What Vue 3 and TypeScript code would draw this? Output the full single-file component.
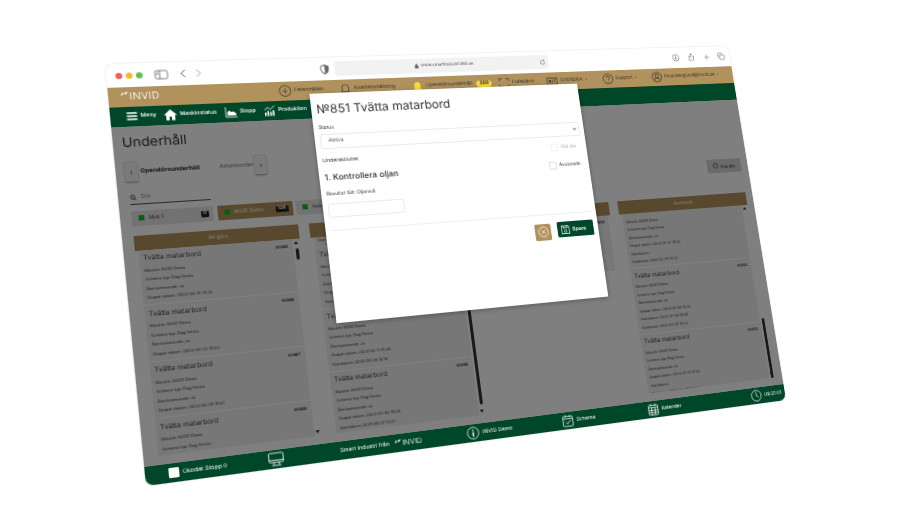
<template>
  <div class="stage">
    <div class="win" :style="{ transform: matrix }">
      <div class="flat">
        <div class="chrome">
          <div class="lights"><i class="red"></i><i class="amber"></i><i class="lime"></i></div>
          <svg class="cicon side" viewBox="0 0 24 20"><rect x="1" y="2" width="22" height="16" rx="3" /><path d="M9 2v16M3.500 6h3M3.500 9h3" /></svg>
          <svg class="cicon back" viewBox="0 0 12 20"><path d="M10 2 2 10l8 8" /></svg>
          <svg class="cicon fwd" viewBox="0 0 12 20"><path d="m2 2 8 8-8 8" /></svg>
          <svg class="shield" viewBox="0 0 20 22"><path d="M10 1 2 4v6c0 5 3.500 9 8 11 4.500-2 8-6 8-11V4z" fill="#fff" stroke="#666" stroke-width="2" /><path d="M10 1v20c4.500-2 8-6 8-11V4z" fill="#666" /></svg>
          <div class="url">
            <svg class="lock" viewBox="0 0 10 12"><path d="M1 5h8v7H1zM3 5V3a2 2 0 0 1 4 0v2" /></svg>
            <span>www.smartindustri365.se</span>
            <svg class="cicon reload" viewBox="0 0 20 20"><path d="M16 10a6 6 0 1 1-2-4.500M14 2v4h-4" /></svg>
          </div>
          <svg class="cicon dl" viewBox="0 0 22 22"><circle cx="11" cy="11" r="9" /><path d="M11 6v9M7.500 12l3.500 3.500 3.500-3.500" /></svg>
          <svg class="cicon share" viewBox="0 0 20 24"><path d="M6 9H3v13h14V9h-3M10 15V2M6.500 5 10 1.500 13.500 5" /></svg>
          <svg class="cicon plus" viewBox="0 0 20 20"><path d="M10 3v14M3 10h14" /></svg>
          <svg class="cicon copies" viewBox="0 0 22 22"><rect x="7" y="7" width="13" height="13" rx="2" /><path d="M15 4a2 2 0 0 0-2-2H4a2 2 0 0 0-2 2v9a2 2 0 0 0 2 2" /></svg>
        </div>

        <header class="topbar">
          <div class="logo">
            <svg class="leaf" viewBox="0 0 24 16"><path d="M1 14C1 8 4 4 9 3c0 6-3 10-8 11zM11 11c0-5 4-9 12-10-1 6-5 10-12 10z" /></svg>
            <span>INVID</span>
          </div>
          <div class="tool">
            <svg class="ic" viewBox="0 0 28 28"><circle cx="14" cy="14" r="12" /><path d="M14 8v12M8 14h12" /></svg>
            <span>Felanmälan</span>
          </div>
          <div class="tool">
            <svg class="ic" viewBox="0 0 28 28"><path d="M7 21V12a7 7 0 0 1 14 0v9M4 21h20M12 24h4" /></svg>
            <span>Kvalitetsmätning</span>
          </div>
          <div class="tool">
            <svg class="ic bell" viewBox="0 0 28 28"><path d="M7 21V12a7 7 0 0 1 14 0v9l3 2H4z" /></svg>
            <span>Operatörsunderhåll</span><b class="count">389</b>
          </div>
          <div class="tool">
            <svg class="ic" viewBox="0 0 28 28"><path d="M3 10V4h7M18 4h7v6M25 18v6h-7M10 24H3v-6" /></svg>
            <span>Fullskärm</span>
          </div>
          <div class="tool">
            <svg class="ic" viewBox="0 0 28 28"><rect x="2" y="7" width="24" height="15" /><path d="M7 18v-7l3 7v-7M14 11v7M18 11h4M20 11v7" /></svg>
            <span class="caret">SVENSKA</span>
          </div>
          <div class="tool">
            <svg class="ic" viewBox="0 0 28 28"><circle cx="14" cy="14" r="12" /><path d="M10 11a4 4 0 1 1 6 3.500c-1.500.8-2 1.500-2 3M14 20v2" /></svg>
            <span class="caret">Support</span>
          </div>
          <div class="tool">
            <svg class="ic" viewBox="0 0 28 28"><circle cx="14" cy="14" r="12" /><circle cx="14" cy="11" r="4.500" /><path d="M6 23c1-5 4-7 8-7s7 2 8 7" /></svg>
            <span class="caret">linus.berglund@invid.se</span>
          </div>
        </header>

        <nav class="nav">
          <div class="navitem">
            <svg class="navic" viewBox="0 0 24 24"><path d="M3 6h18M3 12h18M3 18h18" stroke-width="2.800" /></svg>
            <span>Meny</span>
          </div>
          <div class="navitem">
            <svg class="navic" viewBox="0 0 24 24"><path class="solid" d="M12 2 0 13h4v10h6v-7h4v7h6V13h4z" /></svg>
            <span>Maskinstatus</span>
          </div>
          <div class="navitem">
            <svg class="navic" viewBox="0 0 24 24"><path d="M2 2v20h21" /><path class="solid" d="M5 19v-7l4-3 3 3 4-1 5 4v4z" /></svg>
            <span>Stopp</span>
          </div>
          <div class="navitem">
            <svg class="navic" viewBox="0 0 24 24"><path d="m2 11 6-5 5 4 8-7" /><path class="solid" d="M2 16h3v7H2zM7 13h3v10H7zM12 15h3v8h-3zM17 12h3v11h-3z" /></svg>
            <span>Produktion</span>
          </div>
        </nav>

        <main class="page">
          <h1>Underhåll</h1>
          <div class="tabstrip">
            <button class="arrow">&#8249;</button>
            <span class="tab on">Operatörsunderhåll</span>
            <span class="tab">Arbetsorder</span>
            <button class="arrow next">&#8250;</button>
          </div>
          <div class="searchrow">
            <div class="search">
              <svg viewBox="0 0 16 16"><circle cx="7" cy="7" r="4.500" /><path d="m10.500 10.500 4 4" /></svg>
              <span>Sök</span>
            </div>
            <button class="showall"><i></i>Visa alla</button>
          </div>
          <div class="chips">
            <div v-for="chip in chips" :key="chip.name" class="chip" :class="{ picked: chip.picked }">
              <i></i><span>{{ chip.name }}</span><b v-if="chip.count">{{ chip.count }}</b>
            </div>
          </div>
          <div class="board">
            <section v-for="col in columns" :key="col.title" class="col">
              <div class="colhead">{{ col.title }}</div>
              <div class="colbody" :class="{ short: col.short }">
                <div class="cards">
                  <article
                    v-for="(c, i) in col.cards"
                    :key="c.no"
                    class="card"
                    :style="i === 0 && col.offset ? { marginTop: col.offset + 'px' } : undefined"
                  >
                    <b class="no">№{{ c.no }}</b>
                    <h3>Tvätta matarbord</h3>
                    <p v-for="line in c.lines" :key="line">{{ line }}</p>
                  </article>
                </div>
                <div v-if="col.thumb" class="bar">
                  <span class="up"></span>
                  <div class="track"><i :style="{ top: col.thumb[0] + 'px', height: col.thumb[1] + 'px' }"></i></div>
                  <span class="down"></span>
                </div>
              </div>
            </section>
          </div>
          <div class="dim"></div>
        </main>

        <footer class="foot">
          <div class="fitem"><i class="box"></i><span>Okodat Stopp 0</span></div>
          <div class="fitem">
            <svg class="fic wide" viewBox="0 0 32 28"><rect x="2" y="2" width="28" height="18" rx="2" /><path d="M2 16h28M12 20l-2 5M20 20l2 5M7 26h18" /></svg>
          </div>
          <div class="fitem smart">
            <span>Smart Industri från</span>
            <svg class="leaf" viewBox="0 0 24 16"><path d="M1 14C1 8 4 4 9 3c0 6-3 10-8 11zM11 11c0-5 4-9 12-10-1 6-5 10-12 10z" /></svg>
            <span class="flogo">INVID</span>
          </div>
          <div class="fitem">
            <svg class="fic" viewBox="0 0 28 28"><circle cx="14" cy="14" r="12" /><path d="M14 12v9M14 7v2.500" stroke-width="3" /></svg>
            <span>INVID Demo</span>
          </div>
          <div class="fitem">
            <svg class="fic" viewBox="0 0 28 28"><rect x="3" y="5" width="22" height="21" rx="2" /><path d="M3 10h22M9 2v5M19 2v5M9 17l4 4 7-8" /></svg>
            <span>Schema</span>
          </div>
          <div class="fitem">
            <svg class="fic" viewBox="0 0 28 28"><rect x="3" y="5" width="22" height="21" rx="2" /><path d="M3 10h22M9 2v5M19 2v5M3 16h22M3 21h22M10 10v16M18 10v16" /></svg>
            <span>Kalender</span>
          </div>
          <div class="fitem">
            <svg class="fic" viewBox="0 0 28 28"><circle cx="14" cy="14" r="12" /><path d="M14 6v8l5 4" /></svg>
            <span>09:21:01</span>
          </div>
        </footer>

        <section class="modal">
          <h2>№851 Tvätta matarbord</h2>
          <label class="status">Status</label>
          <div class="select"><span>Aktiva</span><svg viewBox="0 0 10 6"><path d="m1 1 4 4 4-4" /></svg></div>
          <div class="checkrow faded"><i></i><span>Välj alla</span></div>
          <div class="subrow">
            <div>
              <div class="sublabel">Underaktivitet</div>
              <div class="subtitle">1. Kontrollera oljan</div>
            </div>
            <div class="checkrow done"><i></i><span>Avslutade</span></div>
          </div>
          <div class="result">Resultat fält: Oljenivå</div>
          <div class="field"></div>
          <hr />
          <div class="actions">
            <button class="cancel">
              <svg viewBox="0 0 24 24"><circle cx="12" cy="12" r="10" /><path d="m8 8 8 8M16 8l-8 8" /></svg>
            </button>
            <button class="save">
              <svg viewBox="0 0 24 24"><path d="M3 3h15l3 3v15H3zM7 3v5h9V3" /><circle cx="12" cy="15" r="3" /></svg>
              Spara
            </button>
          </div>
        </section>
      </div>
    </div>
  </div>
</template>

<script setup lang="ts">
interface Card {
  no: number;
  lines: string[];
}

interface Column {
  title: string;
  cards: Card[];
  offset?: number;
  thumb?: [number, number];
  short?: boolean;
}

const corners = [[105, 64], [728, 46], [786, 400], [146, 486]];
// size of .win, the .flat inside it is 1280x780 at zoom 0.5
const W = 640;
const H = 390;

// maps the flat window onto the four corners of the tilted window
const toMatrix = (): string => {
  const [[x0, y0], [x1, y1], [x2, y2], [x3, y3]] = corners;
  const sx = x0 - x1 + x2 - x3;
  const sy = y0 - y1 + y2 - y3;
  const dx1 = x1 - x2;
  const dx2 = x3 - x2;
  const dy1 = y1 - y2;
  const dy2 = y3 - y2;
  const den = dx1 * dy2 - dx2 * dy1;
  const g = (sx * dy2 - dx2 * sy) / den;
  const h = (dx1 * sy - sx * dy1) / den;
  const a = x1 - x0 + g * x1;
  const b = x3 - x0 + h * x3;
  const d = y1 - y0 + g * y1;
  const e = y3 - y0 + h * y3;
  return `matrix3d(${a / W},${d / W},0,${g / W},${b / H},${e / H},0,${h / H},0,0,1,0,${x0},${y0},0,1)`;
};

const matrix = toMatrix();

const base = ['Maskin: INVID Demo', 'Schema typ: Dag/Vecka', 'Återkommande: Ja'];

const card = (no: number, ...dates: string[]): Card => ({ no, lines: [...base, ...dates] });

const chips = [
  { name: 'Msk 1', count: '0', picked: false },
  { name: 'INVID Demo', count: '139', picked: true },
  { name: 'Valsmaskin', count: '', picked: false },
];

const columns: Column[] = [
  {
    title: 'Att göra',
    thumb: [4, 22],
    cards: [
      card(865, 'Skapat datum: 2024-04-15 15:42'),
      card(866, 'Skapat datum: 2024-04-22 15:42'),
      card(867, 'Skapat datum: 2024-04-29 15:41'),
      card(868, 'Skapat datum: 2024-05-06 15:42'),
    ],
  },
  {
    title: 'Startade',
    offset: -100,
    thumb: [20, 320],
    cards: [
      card(859, 'Skapat datum: 2024-03-25 15:40', 'Startdatum: 2025-05-28 10:20'),
      card(858, 'Skapat datum: 2024-03-18 15:40', 'Startdatum: 2025-05-28 10:19'),
      card(857, 'Skapat datum: 2024-03-11 15:40', 'Startdatum: 2025-05-28 10:18'),
      card(856, 'Skapat datum: 2024-03-04 15:40', 'Startdatum: 2025-05-27 14:21'),
    ],
  },
  {
    title: 'Pausade',
    short: true,
    cards: [card(855, 'Skapat datum: 2024-02-26 15:40', 'Startdatum: 2025-05-27 14:20')],
  },
  {
    title: 'Avslutade',
    offset: -20,
    thumb: [232, 140],
    cards: [
      card(854, 'Skapat datum: 2024-01-22 15:42', 'Startdatum:', 'Slutdatum: 2024-02-07 15:32'),
      card(853, 'Skapat datum: 2024-01-08 15:42', 'Startdatum: 2024-01-08 20:00', 'Slutdatum: 2024-02-07 15:32'),
      card(852, 'Skapat datum: 2024-01-15 15:42', 'Startdatum:', 'Slutdatum: 2024-02-07 15:28'),
    ],
  },
];
</script>

<style>
html,
body {
  margin: 0;
  background: #fff;
  overflow: hidden;
}
</style>

<style scoped>
.stage {
  width: 900px;
  height: 506px;
  overflow: hidden;
  background: #fff;
  filter: blur(0.3px);
  font-family: Inter, "Noto Sans", sans-serif;
  text-rendering: geometricPrecision;
  color: #333;
}

.win {
  width: 640px;
  height: 390px;
  overflow: hidden;
  border-radius: 7px;
  transform-origin: 0 0;
  box-shadow: 0 0 1px rgba(0, 0, 0, 0.5);
}

.flat {
  position: relative;
  zoom: 0.5;
  width: 1280px;
  height: 780px;
  display: flex;
  flex-direction: column;
  overflow: hidden;
  background: #fff;
}

/* browser chrome */
.chrome {
  height: 46px;
  flex: none;
  display: flex;
  align-items: center;
  padding-left: 15px;
  background: #fff;
}

.lights {
  display: flex;
  gap: 6px;
  width: 66px;
}

.lights i {
  width: 12px;
  height: 12px;
  border-radius: 50%;
}

.red { background: #ee5f58; }
.amber { background: #f5b82f; }
.lime { background: #5cc452; }

.cicon {
  fill: none;
  stroke: #666;
  stroke-width: 1.6;
  flex: none;
}

.side { width: 26px; height: 20px; margin-left: 2px; }
.back { width: 12px; height: 18px; margin-left: 20px; }
.fwd { width: 12px; height: 18px; margin-left: 16px; stroke: #aaa; }
.shield { width: 18px; height: 20px; margin-left: 222px; flex: none; }

.url {
  width: 442px;
  height: 30px;
  margin-left: 11px;
  display: flex;
  align-items: center;
  justify-content: center;
  gap: 4px;
  position: relative;
  background: #f2f2f2;
  border-radius: 6px;
  font-size: 9px;
  color: #555;
}

.lock {
  width: 8px;
  height: 10px;
  fill: #666;
  stroke: #666;
}

.reload {
  position: absolute;
  right: 6px;
  width: 15px;
  height: 15px;
}

.dl { width: 18px; height: 18px; margin-left: 280px; }
.share { width: 15px; height: 21px; margin-left: 20px; }
.plus { width: 16px; height: 16px; margin-left: 21px; }
.copies { width: 18px; height: 18px; margin-left: 18px; }

/* tan bar */
.topbar {
  height: 37px;
  flex: none;
  display: grid;
  grid-template-columns: 284px 116px 144px 180px 104px 123px 113px 1fr;
  align-items: center;
  padding-left: 24px;
  background: #b1925c;
  font-size: 10.5px;
}

.logo {
  display: flex;
  align-items: center;
  color: #fff;
  font-size: 19px;
  font-weight: 300;
  letter-spacing: 0.5px;
}

.logo .leaf {
  width: 13px;
  height: 9px;
  margin: -12px 2px 0 -2px;
  fill: #fff;
}

.tool {
  display: flex;
  align-items: center;
  gap: 5px;
  white-space: nowrap;
}

.ic {
  width: 25px;
  height: 25px;
  flex: none;
  fill: none;
  stroke: #333;
  stroke-width: 1.6;
}

.bell {
  fill: #f7dd3f;
  stroke: none;
}

.count {
  margin-left: 4px;
  padding: 1px 6px;
  border-radius: 9px;
  background: #f7dd3f;
  font-size: 10px;
}

.caret::after {
  content: "";
  display: inline-block;
  margin-left: 6px;
  vertical-align: 2px;
  border: 3.5px solid transparent;
  border-top-color: #333;
  border-bottom-width: 0;
}

/* green nav */
.nav {
  height: 38px;
  flex: none;
  display: flex;
  align-items: center;
  gap: 14px;
  padding-left: 25px;
  background: #00472a;
  color: #fff;
  font-size: 10.5px;
  font-weight: 500;
}

.navitem {
  display: flex;
  align-items: center;
  gap: 4px;
}

.navic {
  width: 24px;
  height: 24px;
  fill: none;
  stroke: #fff;
  stroke-width: 1.5;
}

.navic .solid {
  fill: #fff;
  stroke: none;
}

/* page under the overlay */
.page {
  position: relative;
  flex: 1;
  min-height: 0;
  padding: 16px 16px 0 16px;
  background: #fff;
  overflow: hidden;
}

.dim {
  position: absolute;
  inset: 0;
  background: rgba(0, 0, 0, 0.5);
}

h1 {
  margin: 0;
  font-size: 25px;
  line-height: 32px;
  font-weight: 400;
}

.tabstrip {
  display: flex;
  align-items: center;
  height: 36px;
  margin-top: 21px;
  font-size: 11px;
}

.arrow {
  width: 22px;
  height: 36px;
  flex: none;
  padding: 0;
  border: 0;
  border-radius: 2px;
  background: #f4f4f4;
  box-shadow: 0 1px 4px rgba(0, 0, 0, 0.4);
  font-size: 15px;
  color: #555;
}

.tab {
  margin-left: 10px;
  color: #777;
  white-space: nowrap;
}

.tab.on {
  margin: 0 26px 0 5px;
  color: #222;
  font-weight: 700;
}

.arrow.next {
  margin-left: 2px;
}

.searchrow {
  display: flex;
  align-items: center;
  justify-content: space-between;
  height: 30px;
  margin: 20px 0 0 4px;
}

.search {
  display: flex;
  align-items: center;
  gap: 7px;
  width: 142px;
  height: 22px;
  margin-top: -8px;
  border-bottom: 1px solid #555;
  font-size: 10px;
  color: #888;
}

.search svg {
  width: 12px;
  height: 12px;
  fill: none;
  stroke: #222;
  stroke-width: 2;
}

.showall {
  width: 80px;
  height: 30px;
  margin-top: 10px;
  border: 0;
  border-radius: 2px;
  background: #d5d5d5;
  font: 9px Inter, sans-serif;
  color: #333;
}

.showall i {
  display: inline-block;
  width: 8px;
  height: 8px;
  margin-right: 4px;
  border-radius: 50%;
  border: 1px solid #2c8a3a;
}

.chips {
  display: flex;
  gap: 7px;
  margin: 5px 0 0 4px;
}

.chip {
  width: 144px;
  height: 28px;
  display: flex;
  align-items: center;
  gap: 8px;
  padding: 0 8px 0 12px;
  box-sizing: border-box;
  background: #e4e4e4;
  font-size: 9.5px;
}

.chip.picked {
  width: 138px;
  background: #b1925c;
  color: #fff;
}

.chip:last-child {
  width: 180px;
}

.chip i {
  width: 10px;
  height: 10px;
  background: #18b52c;
}

.chip b {
  margin-left: auto;
  padding: 1px 4px;
  border-radius: 2px;
  background: #222;
  color: #fff;
  font-size: 9px;
}

.board {
  display: grid;
  grid-template-columns: repeat(4, 295px);
  gap: 21px;
  margin: 18px 0 0 4px;
  height: 403px;
}

.col {
  display: flex;
  flex-direction: column;
  min-height: 0;
}

.colhead {
  height: 28px;
  flex: none;
  display: flex;
  align-items: center;
  justify-content: center;
  background: #b1925c;
  color: #fff;
  font-size: 9.5px;
}

.colbody {
  flex: 1;
  min-height: 0;
  display: flex;
  padding-left: 5px;
  overflow: hidden;
}

.colbody.short {
  flex: none;
  height: 117px;
  padding-right: 5px;
}

.cards {
  flex: 1;
  min-width: 0;
  overflow: hidden;
}

.card {
  position: relative;
  padding: 5px 8px 3px;
  background: #eeeeee;
  border-bottom: 2px solid #fff;
}

.no {
  position: absolute;
  top: 8px;
  right: 8px;
  font-size: 7.5px;
  color: #222;
}

h3 {
  margin: 0 0 3px;
  font-size: 12.5px;
  line-height: 22px;
  font-weight: 400;
  color: #444;
}

.card p {
  margin: 0;
  font-size: 7.4px;
  line-height: 17px;
  color: #444;
}

.bar {
  width: 14px;
  flex: none;
  display: flex;
  flex-direction: column;
  align-items: center;
}

.up,
.down {
  flex: none;
  margin: 4px 0;
  border: 4px solid transparent;
}

.up {
  border-top-width: 0;
  border-bottom: 6px solid #333;
}

.down {
  border-bottom-width: 0;
  border-top: 6px solid #333;
}

.track {
  position: relative;
  flex: 1;
  width: 100%;
}

.track i {
  position: absolute;
  left: 4px;
  width: 6px;
  border-radius: 3px;
  background: #333;
}

/* green footer */
.foot {
  height: 34px;
  flex: none;
  display: grid;
  grid-template-columns: 172px 133px 243px 193px 184px 235px 1fr;
  align-items: center;
  padding-left: 40px;
  background: #00472a;
  color: #fff;
  font-size: 10.5px;
}

.fitem {
  display: flex;
  align-items: center;
  gap: 6px;
  white-space: nowrap;
}

.box {
  width: 18px;
  height: 18px;
  border-radius: 2px;
  background: #fff;
}

.fic {
  width: 26px;
  height: 26px;
  flex: none;
  fill: none;
  stroke: #fff;
  stroke-width: 1.6;
}

.fic.wide {
  width: 32px;
}

.smart .leaf {
  width: 12px;
  height: 8px;
  margin: -8px -3px 0 4px;
  fill: #fff;
}

.flogo {
  font-size: 14px;
  font-weight: 300;
}

/* dialog */
.modal {
  position: absolute;
  left: 365px;
  top: 72px;
  width: 553px;
  height: 452px;
  box-sizing: border-box;
  padding: 16px 10px 0 11px;
  background: #fff;
  box-shadow: 0 2px 10px rgba(0, 0, 0, 0.3);
  color: #333;
}

h2 {
  margin: 0;
  font-size: 24px;
  line-height: 30px;
  font-weight: 400;
}

.status {
  display: block;
  margin-top: 18px;
  font-size: 10px;
  line-height: 14px;
}

.select {
  display: flex;
  align-items: center;
  justify-content: space-between;
  height: 26px;
  margin: 3px 0 0;
  padding: 0 5px 0 14px;
  border: 1px solid #eaeaea;
  border-radius: 3px;
  font-size: 10px;
  color: #555;
}

.select svg {
  width: 8px;
  height: 6px;
  fill: none;
  stroke: #333;
  stroke-width: 1.6;
}

.checkrow {
  display: flex;
  align-items: center;
  justify-content: flex-end;
  gap: 5px;
  font-size: 10px;
  color: #444;
}

.checkrow i {
  width: 12px;
  height: 12px;
  border: 1px solid #ddd;
  border-radius: 2px;
}

.faded {
  margin-top: 14px;
  padding-right: 12px;
  font-size: 9.5px;
  opacity: 0.45;
}

.subrow {
  display: flex;
  justify-content: space-between;
  align-items: flex-start;
  margin-top: -12px;
}

.done {
  margin-top: 34px;
  padding-right: 8px;
}

.sublabel {
  font-size: 10.5px;
  line-height: 14px;
}

.subtitle {
  margin-top: 12px;
  font-size: 16.5px;
  line-height: 24px;
  font-weight: 500;
}

.result {
  margin: 17px 0 0;
  font-size: 9.5px;
  line-height: 12px;
}

.field {
  width: 148px;
  height: 28px;
  margin: 12px 0 0;
  box-sizing: border-box;
  border: 1px solid #eaeaea;
  border-radius: 3px;
}

hr {
  margin: 24px 0 0;
  border: 0;
  border-top: 1px solid #eeeeee;
}

.actions {
  display: flex;
  justify-content: flex-end;
  align-items: center;
  gap: 14px;
  margin-top: 17px;
}

.cancel {
  width: 34px;
  height: 34px;
  padding: 4px;
  border: 0;
  border-radius: 3px;
  background: #b1925c;
}

.cancel svg {
  width: 24px;
  height: 24px;
  fill: none;
  stroke: #fff;
  stroke-width: 1.4;
}

.save {
  width: 78px;
  height: 32px;
  display: flex;
  align-items: center;
  gap: 4px;
  padding: 0 6px;
  border: 0;
  border-radius: 3px;
  background: #00472a;
  color: #fff;
  font: 600 10.5px Inter, sans-serif;
  margin-top: -4px;
}

.save svg {
  width: 22px;
  height: 22px;
  fill: none;
  stroke: #fff;
  stroke-width: 1.4;
}
</style>
